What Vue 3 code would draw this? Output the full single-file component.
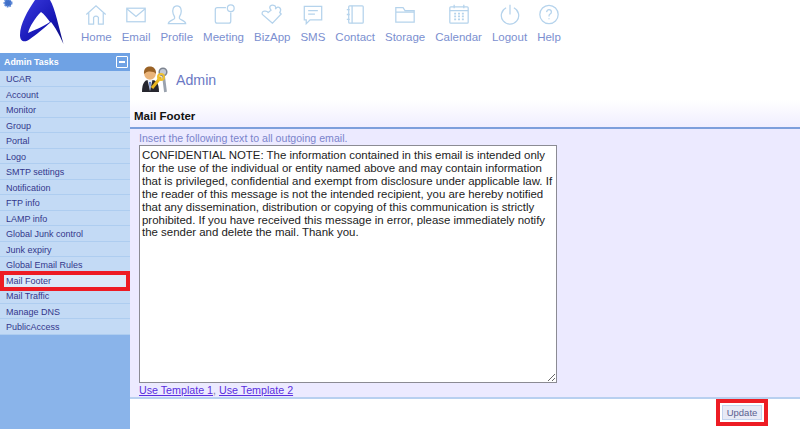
<script setup>
const nav = ['Home','Email','Profile','Meeting','BizApp','SMS','Contact','Storage','Calendar','Logout','Help']
const items = ['UCAR','Account','Monitor','Group','Portal','Logo','SMTP settings','Notification','FTP info','LAMP info','Global Junk control','Junk expiry','Global Email Rules','Mail Footer','Mail Traffic','Manage DNS','PublicAccess']
const footer = 'CONFIDENTIAL NOTE: The information contained in this email is intended only for the use of the individual or entity named above and may contain information that is privileged, confidential and exempt from disclosure under applicable law. If the reader of this message is not the intended recipient, you are hereby notified that any dissemination, distribution or copying of this communication is strictly prohibited. If you have received this message in error, please immediately notify the sender and delete the mail. Thank you.'
</script>

<template>
  <div class="page">
    <header class="top">
      <div class="logo">
        <svg width="66" height="48" viewBox="0 0 66 48">
          <circle cx="8" cy="3" r="3.500" fill="#3f6fc8" stroke="#5f8ad8" stroke-width="2" stroke-dasharray="1.500 1"/>
          <defs><linearGradient id="sw" x1="0" y1="0" x2="1" y2="1"><stop offset="0" stop-color="#3c3ce0"/><stop offset="0.6" stop-color="#1616b4"/><stop offset="1" stop-color="#0c0c78"/></linearGradient></defs>
          <path d="M35 0 H50 C55 8 59 28 63.500 44 C59 34 55 27 51 22 C44 28 36 35 30 39 C25 43 20 42 20 35 C20 24 28 10 35 0 Z M41 12 C35 18 30 26 28 33 C35 30 44 26 50 22 C47 18 44 14 41 12 Z" fill="url(#sw)" fill-rule="evenodd"/>
        </svg>
      </div>
      <nav class="nav">
        <a v-for="n in nav" :key="n" class="nav-item">
          <svg class="ico" width="30" height="30" viewBox="0 0 30 30" fill="none" stroke="#b5d3ec" stroke-width="1.300">
            <template v-if="n==='Home'"><path d="M5 15 L15 6 L25 15"/><path d="M7.500 13.500 V25 H12.500 V18 Q15 15.500 17.500 18 V25 H22.500 V13.500"/></template>
            <template v-else-if="n==='Email'"><rect x="5.500" y="8.500" width="19" height="14"/><path d="M5.500 9 L15 17 L24.500 9"/></template>
            <template v-else-if="n==='Profile'"><path d="M15 6 C11 6 10 10 11 14 C11.500 16 13 17 12.500 19 C12 21 6 21 6 24.500 H24 C24 21 18 21 17.500 19 C17 17 18.500 16 19 14 C20 10 19 6 15 6 Z"/></template>
            <template v-else-if="n==='Meeting'"><path d="M17 8 H8 Q6 8 6 10 V22 Q6 24 8 24 H20 Q22 24 22 22 V13"/><circle cx="22" cy="8.500" r="3.500"/></template>
            <template v-else-if="n==='BizApp'"><path d="M15.500 24 L5 15 Q4 12 7 11.500 Q10 11 11 13 L14 10.500 Q12 8 13 6.500 Q15 4.500 18 6 Q19.500 7.500 18.500 9.500 Q21 6 23 8 Q25 10 23 13 L24.500 14.500 Z"/></template>
            <template v-else-if="n==='SMS'"><path d="M6 6.500 H24 V20.500 H12 L8 24.500 V20.500 H6 Z"/><path d="M10 11 H20 M10 14.500 H17"/></template>
            <template v-else-if="n==='Contact'"><rect x="8.500" y="6" width="15" height="18" rx="1"/><path d="M12 6 V24 M6.500 10 H9.500 M6.500 15 H9.500 M6.500 20 H9.500"/></template>
            <template v-else-if="n==='Storage'"><path d="M5.500 8 H13 L15 11 H24.500 V23 H5.500 Z M5.500 12.500 H24.500"/></template>
            <template v-else-if="n==='Calendar'"><rect x="5.500" y="7" width="19" height="17" rx="1"/><path d="M10 5 V8.500 M20 5 V8.500 M5.500 11 H24.500"/><path d="M10 14 h2 M14 14 h2 M18 14 h2 M10 17 h2 M14 17 h2 M18 17 h2 M10 20 h2 M14 20 h2 M18 20 h2" stroke-width="1.800"/></template>
            <template v-else-if="n==='Logout'"><path d="M11 8 A9 9 0 1 0 19 8"/><path d="M15 5 V15"/></template>
            <template v-else><circle cx="15" cy="15" r="9.500"/><path d="M12.500 12.500 Q13 10 15 10 Q17.500 10 17.500 12.500 Q17.500 14 15.500 15 Q15 15.500 15 17"/><path d="M15 19 v1"/></template>
          </svg>
          <span>{{ n }}</span>
        </a>
      </nav>
    </header>
    <div class="body">
      <aside class="side">
        <div class="side-head"><span>Admin Tasks</span><i class="collapse"></i></div>
        <ul class="menu">
          <li v-for="i in items" :key="i" :class="{ active: i==='Mail Footer' }">{{ i }}</li>
        </ul>
      </aside>
      <main class="main">
        <div class="title">
          <svg width="28" height="30" viewBox="0 0 28 30">
            <path d="M1 27 C1 18 4 15 7 15 H11 C15 15 18 18 18 27 Z" fill="#26262e"/>
            <path d="M6.500 15 L9 26 L11.500 15 Z" fill="#e8eef8"/>
            <path d="M8.200 17 L9 25 L9.800 17 Z" fill="#2f55b0"/>
            <circle cx="9" cy="9" r="5.800" fill="#eab47a"/>
            <path d="M3 9 C2.500 3 6 1.500 9 1.500 C12.500 1.500 15.500 4 15 9 C13 6 7 6 5 7.500 Z" fill="#9a6226"/>
            <path d="M22 7 L24.500 27" stroke="#9aa2ae" stroke-width="2.800" fill="none"/>
            <circle cx="22" cy="7" r="3.800" fill="#c4cad4" stroke="#7d8490" stroke-width="1.500"/>
            <path d="M11 23 L20 12" stroke="#e9b520" stroke-width="3"/>
            <circle cx="20" cy="12" r="3" fill="none" stroke="#eec030" stroke-width="2"/>
          </svg>
          <span>Admin</span>
        </div>
        <h2 class="section">Mail Footer</h2>
        <form class="panel" @submit.prevent>
          <label class="hint">Insert the following text to all outgoing email.</label>
          <textarea class="ta" :value="footer"></textarea>
          <div class="links"><a>Use Template 1</a>, <a>Use Template 2</a></div>
        </form>
        <div class="actions"><button class="btn">Update</button></div>
      </main>
    </div>
    <div class="mark mark-item"></div>
    <div class="mark mark-btn"></div>
  </div>
</template>

<style>
html, body { margin: 0; background: #fff; overflow: hidden; }
</style>

<style scoped>
.page { position: relative; width: 800px; height: 429px; overflow: hidden; font-family: "Liberation Sans", Arial, sans-serif; background: #fff; }
.top { display: flex; height: 53px; }
.logo { width: 81px; flex: none; height: 48px; }
.logo svg { display: block; }
.nav { display: flex; gap: 10px; }
.nav-item { display: flex; flex-direction: column; align-items: center; color: #7b8fd0; font-size: 11.500px; line-height: 14px; }
.ico { display: block; height: 29px; margin: 0 -5px 1px; }
.body { display: flex; height: 376px; }
.side { width: 130px; flex: none; background: #8ab4ea; }
.side-head { height: 18px; background: #6fa2e4; color: #fff; font-weight: bold; font-size: 8.900px; display: flex; align-items: center; justify-content: space-between; padding: 0 2px 0 4px; box-sizing: border-box; }
.collapse { width: 10px; height: 10px; border: 1px solid #fff; border-radius: 1px; position: relative; display: block; }
.collapse::after { content: ""; position: absolute; left: 2px; right: 2px; top: 4px; height: 2px; background: #fff; }
.menu { list-style: none; margin: 0; padding: 0; }
.menu li { height: 15.500px; box-sizing: border-box; background: #c3daf5; border-bottom: 1px solid #aecdf0; color: #33378c; font-size: 9px; line-height: 16px; padding-left: 6px; }
.menu li.active { background: #dceafa; }
.main { flex: 1; display: flex; flex-direction: column; }
.title { display: flex; align-items: center; height: 47px; padding: 6px 0 0 11px; gap: 7px; color: #6a78c4; font-size: 14.200px; box-sizing: border-box; }
.section { margin: 0; height: 29px; box-sizing: border-box; padding: 8px 0 0 4px; font-size: 11.500px; font-weight: bold; line-height: 16px; color: #111; background: linear-gradient(#fff, #f0eeff); border-bottom: 2px solid #7d9fdc; }
.panel { height: 270px; background: #eceaff; border-bottom: 2px solid #b8d0f0; box-sizing: border-box; padding: 3px 0 0 9px; display: flex; flex-direction: column; }
.hint { color: #7b84cc; font-size: 10.600px; line-height: 13px; }
.ta { width: 418px; height: 239px; box-sizing: border-box; resize: both; margin: 0; padding: 3px 0 2px 2px; border: 1px solid #8b8b93; background: #fff; color: #222; font: 11.450px/12.900px "Liberation Sans", Arial, sans-serif; outline: none; overflow: hidden; }
.links { font-size: 10.700px; line-height: 14px; color: #8080a0; }
.links a { color: #5a2ee0; text-decoration: underline; }
.actions { flex: 1; display: flex; justify-content: flex-end; padding: 6px 38px 0 0; align-items: flex-start; }
.btn { width: 40px; height: 15px; padding: 0; border: 1px solid #c4d4ee; background: #e8eaf6; color: #5a5f90; font: 9.500px "Liberation Sans", Arial, sans-serif; }
.mark { position: absolute; border: 4px solid #ed1c24; box-sizing: border-box; }
.mark-item { left: 0; top: 271px; width: 130px; height: 20px; }
.mark-btn { left: 716px; top: 399px; width: 52px; height: 27px; }
</style>
